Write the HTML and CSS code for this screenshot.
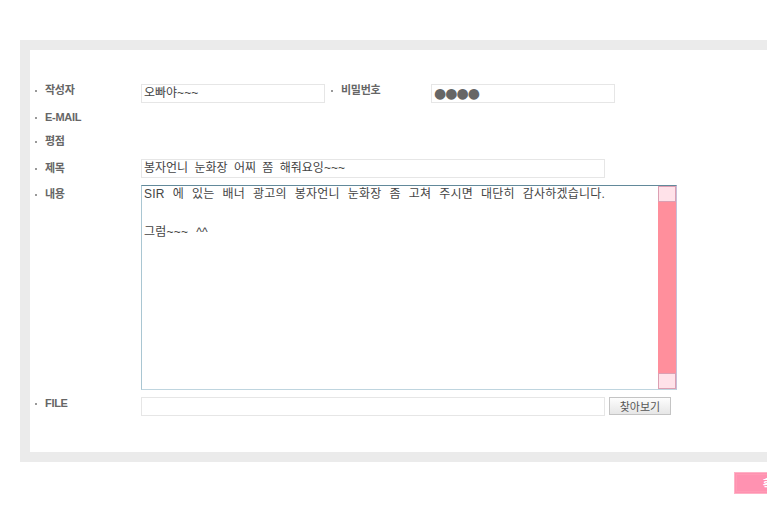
FILE: index.html
```html
<!DOCTYPE HTML>
<html>
<head>
    <title>글쓰기</title>
    <link rel="stylesheet" href="styles.css">
</head>
<body>
<div class="wrap">
    <div class="frame">
        <form class="write_form">
            <div class="row row_input row_first">
                <label class="lbl">작성자</label>
                <div class="field name_field">오빠야~~~</div>
                <label class="lbl lbl_pw">비밀번호</label>
                <div class="field pw_field">●●●●</div>
            </div>
            <div class="row row_short">
                <label class="lbl">E-MAIL</label>
            </div>
            <div class="row row_short">
                <label class="lbl">평점</label>
            </div>
            <div class="row row_input">
                <label class="lbl lbl_low">제목</label>
                <div class="field subject_field">봉자언니 눈화장 어찌 쫌 해줘요잉~~~</div>
            </div>
            <div class="row">
                <label class="lbl lbl_low">내용</label>
                <div class="content_box">
                    <div class="content_text">SIR 에 있는 배너 광고의 봉자언니 눈화장 좀 고쳐 주시면 대단히 감사하겠습니다.<br><br>그럼~~~ ^^</div>
                    <div class="scrollbar">
                        <div class="scroll_btn"></div>
                        <div class="scroll_track"></div>
                        <div class="scroll_btn"></div>
                    </div>
                </div>
            </div>
            <div class="row row_input">
                <label class="lbl">FILE</label>
                <div class="field file_field"></div>
                <button type="button" class="find_btn">찾아보기</button>
            </div>
        </form>
    </div>
    <div class="btn_area">
        <button type="button" class="ok_btn">확인</button>
    </div>
</div>
</body>
</html>
```
FILE: styles.css
```css
body {
    margin: 0;
    overflow: hidden;
    background: #fff;
    font-family: "Liberation Sans", "Noto Sans CJK KR", sans-serif;
}

.wrap {
    width: 780px;
    margin: 40px 0 0 20px;
}

.frame {
    background-color: #ebebeb;
    padding: 10px 0 10px 10px;
}

.write_form {
    background-color: #fff;
    padding: 34px 0 36px 0;
    display: flex;
    flex-direction: column;
    gap: 7px;
}

.row {
    display: flex;
    align-items: flex-start;
}

.row_input {
    height: 19px;
}

.row_first {
    margin-bottom: 1px;
}

.row_short {
    height: 17px;
}

.lbl {
    width: 111px;
    flex-shrink: 0;
    box-sizing: border-box;
    padding-left: 5px;
    display: flex;
    align-items: center;
    gap: 8px;
    font-size: 11px;
    font-weight: bold;
    line-height: 13px;
    color: #666;
    letter-spacing: -0.3px;
}

.lbl::before {
    content: "";
    width: 2px;
    height: 2px;
    background: #999;
}

.lbl_low {
    padding-top: 3px;
}

.lbl_pw {
    width: 106px;
    padding-left: 6px;
    padding-top: 0;
}

.field {
    height: 19px;
    box-sizing: border-box;
    border: 1px solid #e6e6e6;
    background: #fff;
    padding-left: 2px;
    font-size: 12px;
    line-height: 17px;
    color: #444;
    white-space: nowrap;
    word-spacing: 3px;
}

.name_field {
    width: 184px;
}

.pw_field {
    width: 184px;
    font-family: "DejaVu Sans", sans-serif;
    font-size: 14px;
    line-height: 16px;
    color: #666;
    letter-spacing: -1px;
    padding-left: 2px;
}

.subject_field {
    width: 464px;
}

.file_field {
    width: 464px;
}

.content_box {
    width: 536px;
    height: 205px;
    box-sizing: border-box;
    border-top: 1px solid #62899a;
    border-left: 1px solid #a9c6d2;
    border-bottom: 1px solid #bfd5df;
    border-right: 1px solid #c6bdd8;
    display: flex;
}

.content_text {
    flex: 1;
    padding: 0 0 0 2px;
    margin-top: -1px;
    font-size: 12px;
    line-height: 19px;
    color: #444;
    word-spacing: 4.5px;
    letter-spacing: 0.2px;
}

.scrollbar {
    width: 18px;
    display: flex;
    flex-direction: column;
}

.scroll_btn {
    height: 16px;
    box-sizing: border-box;
    background: #ffe2e9;
    border: 1px solid #dc9fb2;
}

.scroll_track {
    flex: 1;
    background: #ff8f9c;
}

.find_btn {
    margin-left: 4px;
    width: 62px;
    height: 18px;
    padding: 0;
    border: 1px solid #c4c4c4;
    background: linear-gradient(#fdfdfd, #e6e6e6);
    font-family: "Noto Sans CJK KR", sans-serif;
    font-size: 11px;
    line-height: 16px;
    color: #555;
}

.btn_area {
    display: flex;
    justify-content: flex-end;
    margin-top: 10px;
}

.ok_btn {
    width: 66px;
    height: 22px;
    border: 1px solid #ffb2c6;
    outline: 1px solid #ff9bb5;
    outline-offset: -3px;
    background: #ff92b1;
    color: #fff;
    font-family: "Noto Sans CJK KR", sans-serif;
    font-size: 11px;
    font-weight: bold;
    padding: 0 0 0 6px;
    text-align: left;
    text-indent: 22px;
}
```
